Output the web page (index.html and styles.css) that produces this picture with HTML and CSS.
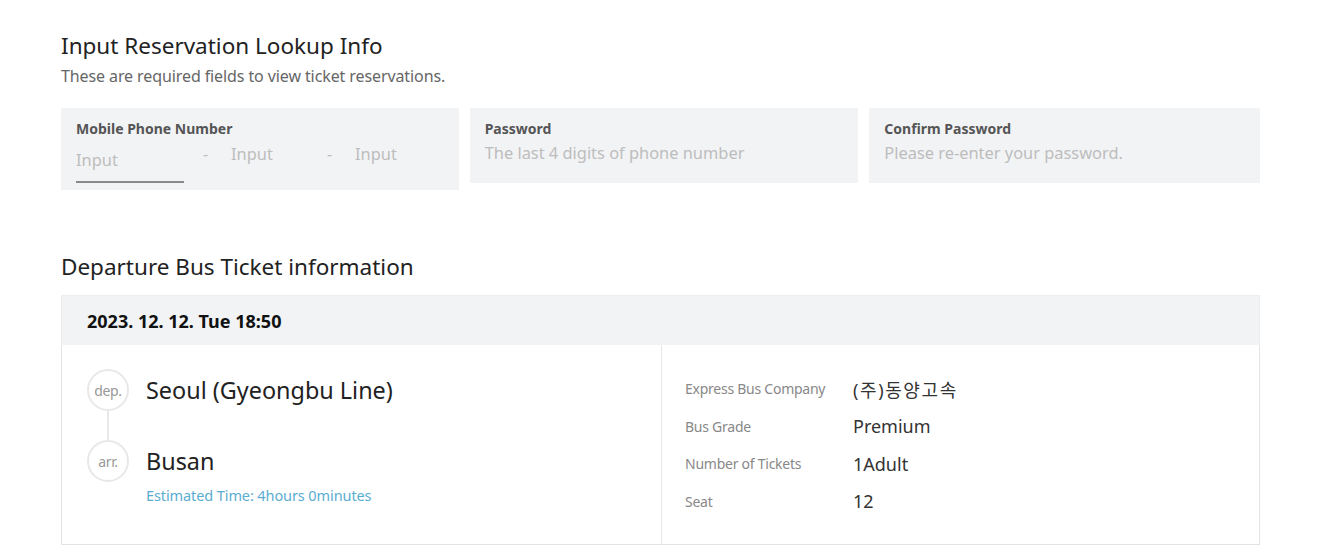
FILE: index.html
```html
<!DOCTYPE html>
<html lang="en">
<head>
<meta charset="utf-8">
<title>Reservation Lookup</title>
<link rel="stylesheet" href="styles.css">
</head>
<body>
<div class="page">
  <section class="lookup">
    <h2 class="sec-title">Input Reservation Lookup Info</h2>
    <p class="sec-desc">These are required fields to view ticket reservations.</p>
    <div class="fields">
      <div class="field field-phone">
        <div class="field-label">Mobile Phone Number</div>
        <div class="phone-row">
          <span class="ph ph-first">Input</span>
          <span class="dash">-</span>
          <span class="ph ph-mid">Input</span>
          <span class="dash">-</span>
          <span class="ph">Input</span>
        </div>
      </div>
      <div class="field field-pw">
        <div class="field-label">Password</div>
        <div class="ph">The last 4 digits of phone number</div>
      </div>
      <div class="field field-pw2">
        <div class="field-label">Confirm Password</div>
        <div class="ph">Please re-enter your password.</div>
      </div>
    </div>
  </section>

  <section class="ticket-sec">
    <h2 class="sec-title">Departure Bus Ticket information</h2>
    <div class="ticket">
      <div class="ticket-head">2023. 12. 12. Tue 18:50</div>
      <div class="ticket-body">
        <div class="route">
          <div class="stop">
            <span class="badge">dep.</span>
            <span class="place">Seoul (Gyeongbu Line)</span>
          </div>
          <div class="connector"></div>
          <div class="stop">
            <span class="badge">arr.</span>
            <span class="place">Busan</span>
          </div>
          <div class="est">Estimated Time: 4hours 0minutes</div>
        </div>
        <dl class="info">
          <dt>Express Bus Company</dt><dd class="ko">(주)동양고속</dd>
          <dt>Bus Grade</dt><dd>Premium</dd>
          <dt>Number of Tickets</dt><dd>1Adult</dd>
          <dt>Seat</dt><dd>12</dd>
        </dl>
      </div>
    </div>
  </section>
</div>
</body>
</html>
```

FILE: styles.css
```css
* { box-sizing: border-box; }
body {
  margin: 0;
  background: #fff;
  font-family: "Noto Sans", "Noto Sans CJK KR", sans-serif;
  color: #222;
}
.page {
  width: 1199px;
  margin-left: 61px;
  padding-top: 32px;
}
.sec-title {
  margin: 0;
  font-size: 22.5px;
  font-weight: 400;
  line-height: 28px;
  color: #222;
}
.sec-desc {
  margin: 6px 0 0;
  font-size: 16px;
  line-height: 20px;
  color: #666;
  letter-spacing: -0.1px;
}
.fields {
  display: flex;
  align-items: flex-start;
  gap: 11px;
  margin-top: 22px;
}
.field {
  background: #f2f3f5;
  padding: 12px 15px 0;
}
.field-phone { width: 398px; height: 82px; }
.field-pw { width: 389px; height: 75px; }
.field-pw2 { width: 391px; height: 75px; }
.field-label {
  font-size: 14px;
  font-weight: 700;
  line-height: 18px;
  color: #555;
}
.ph {
  font-size: 16.4px;
  line-height: 24px;
  color: #bdbdbd;
}
.field-pw .ph, .field-pw2 .ph { margin-top: 3px; }
.phone-row {
  display: flex;
  align-items: flex-start;
  margin-top: 4px;
}
.ph-first {
  width: 108px;
  padding-top: 6px;
  height: 41px;
  border-bottom: 2px solid #8a8a8a;
}
.dash {
  color: #bdbdbd;
  font-size: 16px;
  line-height: 24px;
  width: 28px;
  margin-left: 19px;
}
.ph-mid { width: 77px; }

.ticket-sec { margin-top: 63px; }
.ticket { margin-top: 14px; }
.ticket-head {
  height: 50px;
  background: #f2f3f5;
  padding-left: 25px;
  font-size: 18px;
  font-weight: 700;
  line-height: 50px;
  color: #111;
  border: 1px solid #eceef0;
  border-bottom: none;
}
.ticket-body {
  display: grid;
  grid-template-columns: 600px 1fr;
  height: 200px;
  border: 1px solid #e3e3e3;
  border-top: none;
}
.route {
  border-right: 1px solid #e6e6e6;
  padding: 24px 0 0 25px;
}
.stop {
  display: flex;
  align-items: center;
  gap: 17px;
}
.badge {
  width: 42px;
  height: 42px;
  flex: none;
  border: 2px solid #e8e8e8;
  border-radius: 50%;
  display: flex;
  align-items: center;
  justify-content: center;
  font-size: 14px;
  color: #999;
  letter-spacing: -0.4px;
}
.place {
  font-size: 23.4px;
  line-height: 28px;
  color: #222;
}
.connector {
  width: 2px;
  height: 29px;
  background: #e8e8e8;
  margin-left: 20px;
}
.est {
  margin: 3px 0 0 59px;
  font-size: 14.5px;
  line-height: 20px;
  color: #5aadd1;
  letter-spacing: -0.1px;
}
.info {
  margin: 0;
  padding: 25px 0 0 23px;
  display: grid;
  grid-template-columns: 168px 1fr;
  grid-auto-rows: 37.5px;
  align-items: center;
}
.info dt {
  font-size: 14px;
  color: #888;
  letter-spacing: -0.25px;
}
.info dd {
  margin: 0;
  font-size: 18px;
  color: #333;
}
.info dd.ko { letter-spacing: 1.6px; }
```
